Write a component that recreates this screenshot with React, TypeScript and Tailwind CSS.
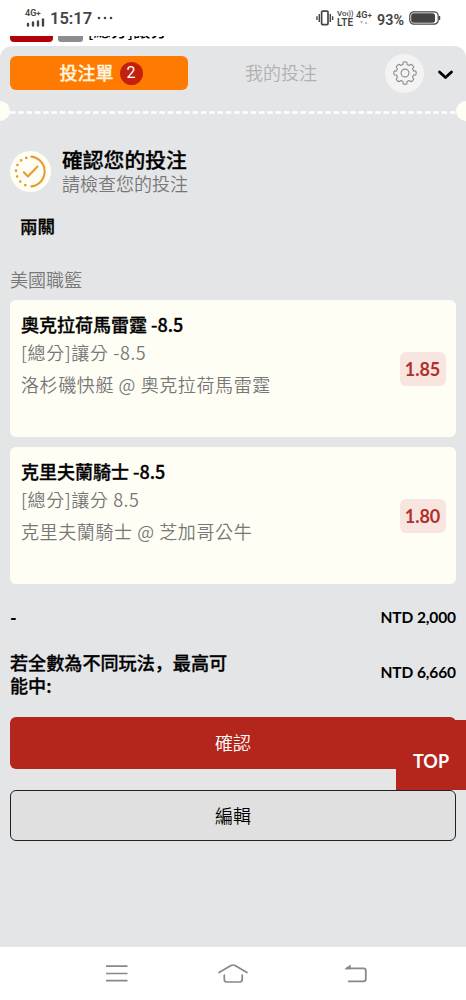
type Bet = {
    id: number;
    pick: string;
    market: string;
    match: string;
    odds: string;
};

const bets: Bet[] = [
    { id: 1, pick: "奧克拉荷馬雷霆 -8.5", market: "[總分]讓分 -8.5", match: "洛杉磯快艇 @ 奧克拉荷馬雷霆", odds: "1.85" },
    { id: 2, pick: "克里夫蘭騎士 -8.5", market: "[總分]讓分 8.5", match: "克里夫蘭騎士 @ 芝加哥公牛", odds: "1.80" },
];

function StatusBar() {
    return (
        <div className="relative z-10 flex h-9 items-center justify-between bg-white pl-[25px] pr-[25px] font-[Roboto,sans-serif] text-[#444]">
            <div className="flex items-center">
                <div className="flex h-[17px] w-5 flex-col justify-between">
                    <span className="text-[9px] leading-[7px] font-semibold whitespace-nowrap">4G<span className="text-[8px]">+</span></span>
                    <svg width="20" height="9" viewBox="0 0 20 9" stroke="#444" strokeWidth="2.4" strokeLinecap="round">
                        <path d="M3 6V7.5M8 4.5V7.5M13 3.5V7.5M18 1.5V7.5" />
                    </svg>
                </div>
                <span className="ml-[5px] mt-0.5 text-[16.5px] leading-5 font-semibold">15:17</span>
                <svg className="ml-[5px]" width="16" height="4" fill="#444">
                    <circle cx="2" cy="2" r="1.3" />
                    <circle cx="8" cy="2" r="1.3" />
                    <circle cx="14" cy="2" r="1.3" />
                </svg>
            </div>
            <div className="flex items-center">
                <svg width="18" height="16" viewBox="0 0 18 16" fill="none" stroke="#444" strokeWidth="1.4">
                    <rect x="5.6" y="1.2" width="6.4" height="13.4" rx="1" strokeWidth="1.7" />
                    <path d="M3.3 4V12M1 6.2V10M14.3 4V12M16.6 6.2V10" />
                </svg>
                <div className="ml-[3px] w-[17px] pt-px">
                    <div className="text-[8px] leading-[7px] font-medium whitespace-nowrap">Vo<span className="text-[7px]">ı))</span></div>
                    <div className="text-[10px] leading-[9px] font-semibold">LTE</div>
                </div>
                <div className="ml-[2px] w-[17px] pb-px">
                    <div className="text-[9px] leading-[9px] font-semibold whitespace-nowrap">4G<span className="text-[8px]">+</span></div>
                    <svg width="15" height="5" fill="#bbb">
                        <path d="M4 1h3.2L5.6 4zM8.5 4h3L10 1z" />
                    </svg>
                </div>
                <span className="ml-[4px] mt-[3px] text-[14.3px] leading-5 font-semibold">93%</span>
                <svg className="ml-[5px]" width="32" height="14" viewBox="0 0 32 14">
                    <rect x=".8" y=".8" width="28.4" height="12.4" rx="4" fill="none" stroke="#444" strokeWidth="1.2" />
                    <rect x="2.2" y="2.2" width="23.8" height="9.6" rx="2.5" fill="#444" />
                    <path d="M30.6 5v4" stroke="#444" strokeWidth="1.2" />
                </svg>
            </div>
        </div>
    );
}

function GearIcon() {
    return (
        <svg width="24" height="24" viewBox="0 0 24 24" fill="none" stroke="#8c8c8c" strokeWidth="1.1" strokeLinejoin="round">
            <path d="M10.1 1.3Q12 .3 13.9 1.3L14 3.5Q15.2 3.9 16.2 4.5L18 3.2Q20 4 20.8 6L19.5 7.8Q20.1 8.8 20.5 10L22.7 10.1Q23.7 12 22.7 13.9L20.5 14Q20.1 15.2 19.5 16.2L20.8 18Q20 20 18 20.8L16.2 19.5Q15.2 20.1 14 20.5L13.9 22.7Q12 23.7 10.1 22.7L10 20.5Q8.8 20.1 7.8 19.5L6 20.8Q4 20 3.2 18L4.5 16.2Q3.9 15.2 3.5 14L1.3 13.9Q.3 12 1.3 10.1L3.5 10Q3.9 8.8 4.5 7.8L3.2 6Q4 4 6 3.2L7.8 4.5Q8.8 3.9 10 3.5Z" />
            <circle cx="12" cy="12" r="3.9" />
        </svg>
    );
}

function BetCard({ bet }: { bet: Bet }) {
    return (
        <div className="flex h-[137px] items-center justify-between rounded-md bg-[#fffef5] pr-[10.5px] pl-[11px]">
            <div className="h-full whitespace-nowrap pt-2.5 font-['Noto_Sans_CJK_TC',sans-serif] text-lg text-[#777]">
                <div className="h-7 leading-7 font-medium text-black [-webkit-text-stroke:0.3px_black]">{bet.pick}</div>
                <div className="h-7 leading-7 font-[350] tracking-[0.6px]">{bet.market}</div>
                <div className="mt-1 h-7 leading-7 font-[350] tracking-[0.6px]">{bet.match}</div>
            </div>
            <div className="flex h-[34px] w-[46px] items-center justify-center rounded-md bg-[#f8e5df] text-lg font-bold text-[#b0302a]">
                {bet.odds}
            </div>
        </div>
    );
}

export default function App() {
    return (
        <div className="relative flex h-[1000px] w-[466px] flex-col overflow-hidden bg-white font-[Lato,'Noto_Sans_CJK_TC',sans-serif] text-black">
            <StatusBar />

            {/* Page content still visible above the bet slip */}
            <div className="flex h-2.5 items-start pl-2.5">
                <div className="h-[6px] w-[43px] rounded-b-[4px] bg-[#b50008]" />
                <div className="ml-[5px] h-[6px] w-[25px] rounded-b-[3px] bg-[#8d8d8d]" />
                <div className="-mt-[13px] ml-[5px] text-[17px] leading-4 font-medium tracking-[0.2px]">[總分]讓分</div>
            </div>

            <div className="flex h-[901px] flex-col rounded-t-[12px] bg-[#e4e5e7]">
                <div className="flex h-[54px] items-center pl-2.5 pr-[12px]">
                    <div className="flex h-[34px] w-[178px] items-center justify-center gap-1.5 rounded-md bg-[#ff7a00] pl-1">
                        <span className="text-lg leading-6 font-medium text-[#fff4dd] [-webkit-text-stroke:0.3px_#fff4dd]">投注單</span>
                        <span className="flex size-[23px] items-center justify-center rounded-full bg-[#c4200f] font-[Roboto,sans-serif] text-base leading-4 text-white">2</span>
                    </div>
                    <div className="ml-[57px] text-lg font-[350] text-[#b0b0b0]">我的投注</div>
                    <div className="ml-auto flex size-[39px] items-center justify-center rounded-full bg-[#f3f3f4]">
                        <GearIcon />
                    </div>
                    <svg className="ml-[13px] mt-1" width="17" height="12" viewBox="0 0 17 12" fill="none" stroke="black" strokeWidth="2.8" strokeLinecap="round" strokeLinejoin="round">
                        <path d="M2.5 3L8.5 8.5L14.5 3" />
                    </svg>
                </div>

                {/* Ticket perforation */}
                <div className="-mx-2.5 flex h-[22px] items-center">
                    <div className="size-5 shrink-0 rounded-full bg-[#fffef5]" />
                    <svg className="mt-0.5 flex-1" height="3" viewBox="0 0 446 3">
                        <path d="M0 1.5H446" stroke="white" strokeWidth="2.4" strokeDasharray="5.5 2.8" />
                    </svg>
                    <div className="size-5 shrink-0 rounded-full bg-[#fffef5]" />
                </div>

                <div className="flex flex-col px-2.5 pt-[26px]">
                    <div className="flex h-[48px] items-center">
                        <div className="mt-[-1px] flex size-[41px] items-center justify-center rounded-full bg-[#fffef5]">
                            <svg width="33" height="33" viewBox="0 0 33 33" fill="none" stroke="#e99a32" strokeWidth="2.1" strokeLinecap="round" strokeLinejoin="round">
                                <path d="M17.4 1.6A15 15 0 0 1 17.4 31.4" />
                                <path d="M9.8 17.2L13.9 21.4L23.5 11.6" />
                                <path d="M12.3 2.9v.01M7.1 5.4v.01M3.4 10v.01M2 15.7v.01M3.1 21.5v.01M6.3 26.5v.01M11.3 30.1v.01" strokeWidth="2.7" />
                            </svg>
                        </div>
                        <div className="ml-[11px]">
                            <div className="text-[20.8px] leading-6 font-medium [-webkit-text-stroke:0.3px_black]">確認您的投注</div>
                            <div className="text-lg leading-6 font-[350] text-[#777]">請檢查您的投注</div>
                        </div>
                    </div>
                    <div className="mt-[19px] pl-2.5 text-[17.5px] leading-6 font-medium [-webkit-text-stroke:0.3px_black]">兩關</div>
                    <div className="mt-[29px] text-lg leading-6 font-[350] text-[#777]">美國職籃</div>

                    <div className="mt-2 flex flex-col gap-2.5">
                        {bets.map((bet) => (
                            <BetCard key={bet.id} bet={bet} />
                        ))}
                    </div>

                    <div className="mt-[22px] flex h-6 items-center justify-between text-[15.5px] font-bold">
                        <span className="text-lg">-</span>
                        <span className="-mt-px tracking-[-0.1px]">NTD 2,000</span>
                    </div>
                    <div className="mt-[21px] flex h-[46px] items-center justify-between text-[15.5px] font-bold">
                        <span className="-mt-px w-[225px] font-['Noto_Sans_CJK_SC',sans-serif] text-[18.1px] leading-[23px] font-medium [-webkit-text-stroke:0.3px_black]">
                            若全數為不同玩法，最高可能中:
                        </span>
                        <span className="-mt-0.5 tracking-[-0.1px]">NTD 6,660</span>
                    </div>

                    <button className="mt-5 h-[52px] rounded-md bg-[#b4261b] text-lg font-[350] text-white">確認</button>
                    <button className="mt-[21px] h-[51px] rounded-md border-[1.5px] border-[#222] bg-[#e0e0e0] text-lg font-[350]">編輯</button>
                </div>
            </div>

            {/* Floating back-to-top button */}
            <div className="absolute top-[720px] right-0 flex h-[70px] w-[70px] items-center justify-center bg-[#b4261b] pt-3 text-lg font-bold text-white">
                TOP
            </div>

            <div className="flex h-[53px] items-center bg-white pl-[105px]">
                <svg width="24" height="20" fill="none" stroke="#888" strokeWidth="1.7">
                    <path d="M1 2.2H22.5M1 9.5H22.5M1 16.7H22.5" />
                </svg>
                <svg className="ml-[88px]" width="32" height="22" viewBox="0 0 32 22" fill="none" stroke="#888" strokeWidth="1.7" strokeLinecap="round" strokeLinejoin="round">
                    <path d="M2 9.5L14 2.6Q16 1.4 18 2.6L30 9.5" />
                    <path d="M7.3 12.2V16.6Q7.3 19 9.7 19H22.8Q25.2 19 25.2 16.6V12.2" />
                </svg>
                <svg className="ml-[94px]" width="26" height="22" viewBox="0 0 26 22" fill="none" stroke="#888" strokeWidth="1.8">
                    <path d="M3 5.4H20.5Q22.8 5.4 22.8 7.7V16Q22.8 18.3 20.5 18.3H5" />
                    <path d="M1.2 6.2L7.7 1.5V6.2Z" fill="#888" stroke="none" />
                </svg>
            </div>
        </div>
    );
}
